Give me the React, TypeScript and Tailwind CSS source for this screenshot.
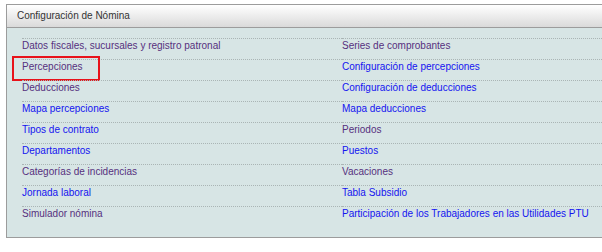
const left = [
  { label: 'Datos fiscales, sucursales y registro patronal', visited: true },
  { label: 'Percepciones', visited: true, marked: true },
  { label: 'Deducciones', visited: true },
  { label: 'Mapa percepciones', visited: false },
  { label: 'Tipos de contrato', visited: false },
  { label: 'Departamentos', visited: false },
  { label: 'Categorías de incidencias', visited: true },
  { label: 'Jornada laboral', visited: false },
  { label: 'Simulador nómina', visited: true },
];

const right = [
  { label: 'Series de comprobantes', visited: true },
  { label: 'Configuración de percepciones', visited: false },
  { label: 'Configuración de deducciones', visited: false },
  { label: 'Mapa deducciones', visited: false },
  { label: 'Periodos', visited: true },
  { label: 'Puestos', visited: false },
  { label: 'Vacaciones', visited: true },
  { label: 'Tabla Subsidio', visited: false },
  { label: 'Participación de los Trabajadores en las Utilidades PTU', visited: false },
];

type Item = { label: string; visited: boolean; marked?: boolean };

function LinkList({ items }: { items: Item[] }) {
  return (
    <ul className="w-[320px] shrink-0">
      {items.map((it) => (
        <li
          key={it.label}
          className="relative h-[21px] border-t border-dotted border-[#aab5b5] leading-[13px] whitespace-nowrap"
        >
          <a
            href="#"
            className={it.visited ? 'text-[#56307e]' : 'text-[#1414f0]'}
          >
            {it.label}
          </a>
          {it.marked && (
            <span className="absolute left-[-10px] top-[-4px] w-[88px] h-[25px] border-2 border-[#e8121a]" />
          )}
        </li>
      ))}
    </ul>
  );
}

export default function App() {
  return (
    <div
      className="w-[602px] h-[252px] bg-white pt-[4px] pl-[6px] overflow-hidden text-[10px]"
      style={{ fontFamily: '"Liberation Sans", Arial, sans-serif' }}
    >
      {/* Panel */}
      <div className="w-[680px] border border-[#9c9c9c]">
        <div className="h-[23px] flex items-center pl-[10px] pb-[2px] bg-gradient-to-b from-white to-[#dadada] border-b border-[#9c9c9c] text-[#333]">
          Configuración de Nómina
        </div>
        <div className="bg-[#d7e5e5] pt-[10px] pl-[15px] h-[209px] flex">
          <LinkList items={left} />
          <LinkList items={right} />
        </div>
      </div>
    </div>
  );
}
